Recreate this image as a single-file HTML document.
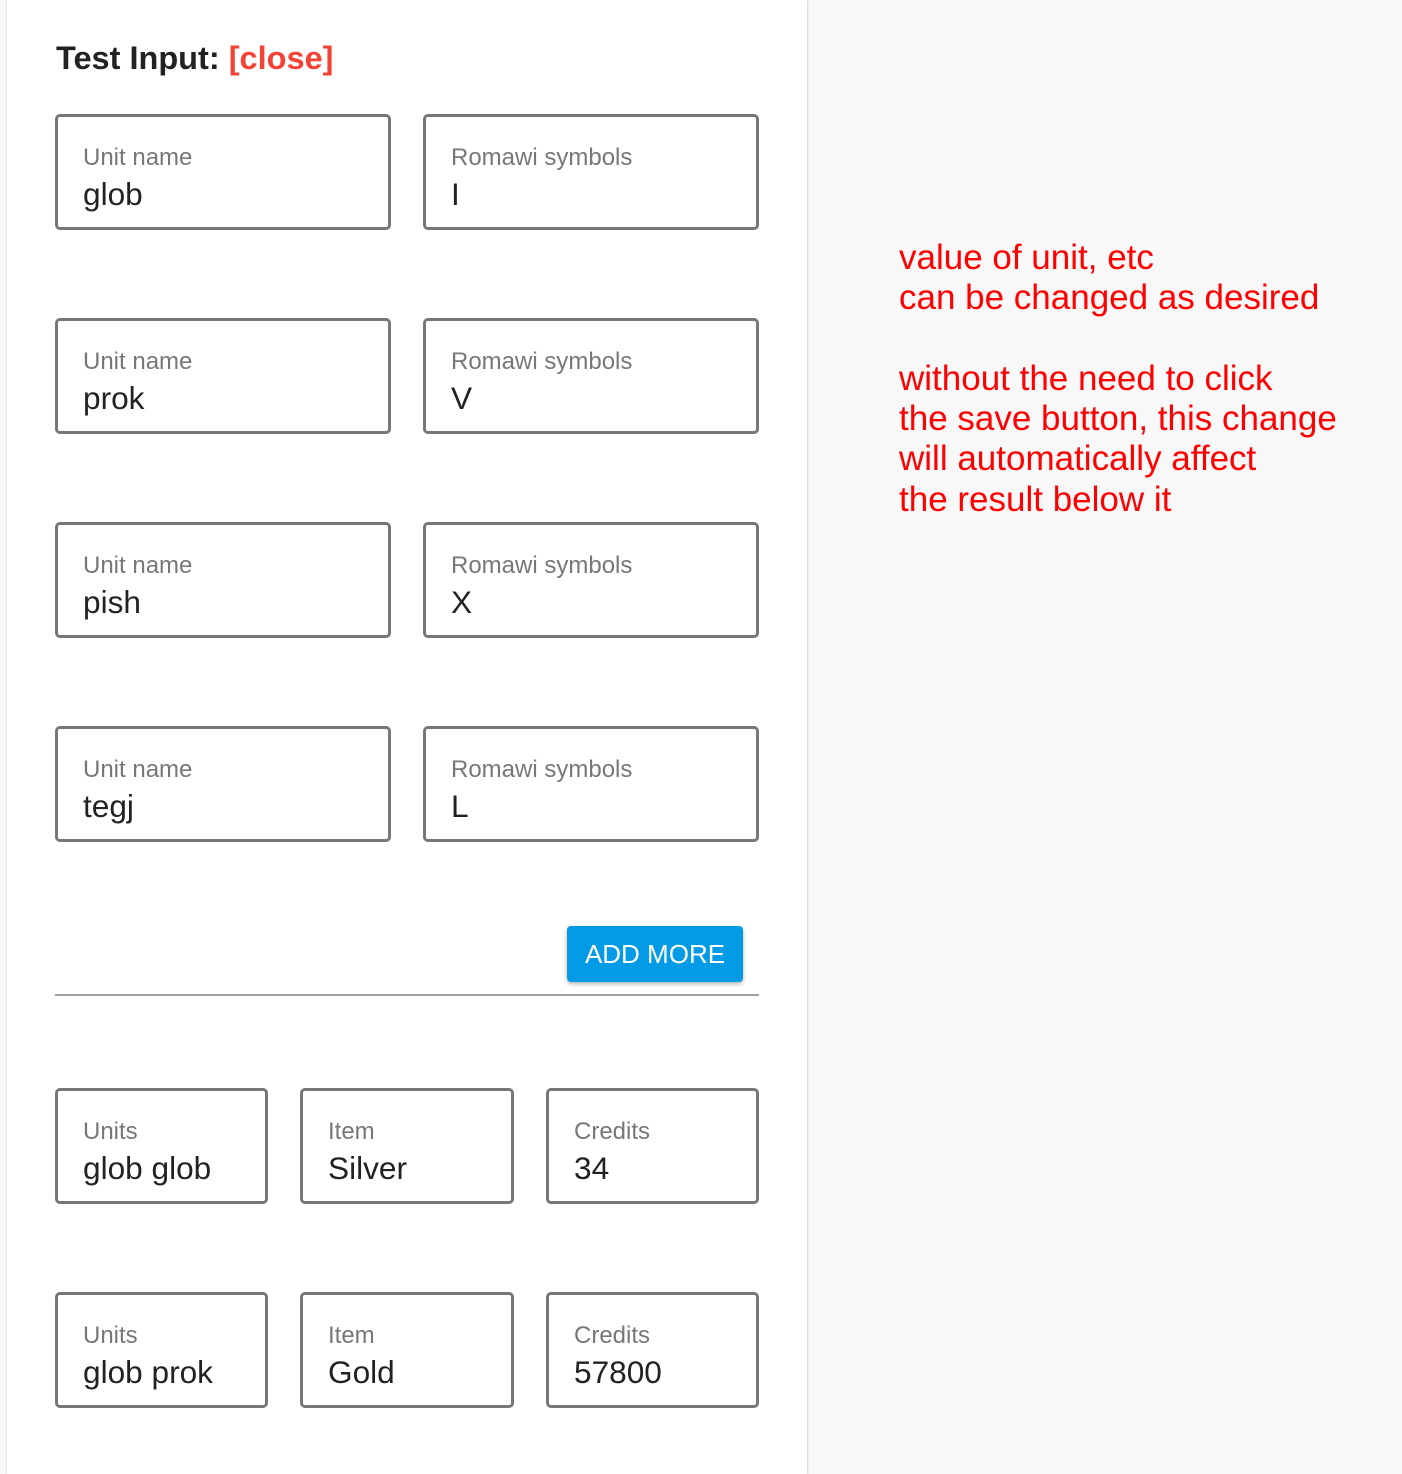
<!DOCTYPE html>
<html><head><meta charset="utf-8"><style>
*{margin:0;padding:0;box-sizing:border-box}
body{width:1402px;height:1474px;background:#f8f8f8;font-family:"Liberation Sans",Arial,sans-serif;position:relative;overflow:hidden}
.panel{position:absolute;left:7px;top:0;width:800px;height:1474px;background:#fff;box-shadow:1px 0 2px rgba(0,0,0,.15),-1px 0 2px rgba(0,0,0,.08)}
.title{position:absolute;left:56px;top:38px;font-size:32.5px;font-weight:bold;color:#222;line-height:40px}
.title span{color:#f44336}
.box{position:absolute;border:3px solid #777;border-radius:5px;height:116px;background:#fff}
.lab{position:absolute;left:25px;top:28px;font-size:24px;line-height:26px;color:#777;white-space:nowrap}
.val{position:absolute;left:25px;top:59px;font-size:31.6px;line-height:36px;color:#222;white-space:nowrap}
.btn{position:absolute;left:567px;top:926px;width:176px;height:56px;background:#039be5;color:#fff;font-size:26px;line-height:56px;text-align:center;border-radius:4px;box-shadow:0 2px 4px rgba(0,0,0,.3)}
.hr{position:absolute;left:55px;top:994px;width:704px;height:2px;background:#a0a0a0}
.note{position:absolute;left:899px;top:238px;color:#f00;font-size:35px;line-height:40.3px;white-space:pre}
</style></head><body>
<div class="panel"></div>
<div class="title">Test Input: <span>[close]</span></div>

<div class="box" style="left:55px;top:114px;width:336px"><div class="lab">Unit name</div><div class="val">glob</div></div>
<div class="box" style="left:423px;top:114px;width:336px"><div class="lab">Romawi symbols</div><div class="val">I</div></div>
<div class="box" style="left:55px;top:318px;width:336px"><div class="lab">Unit name</div><div class="val">prok</div></div>
<div class="box" style="left:423px;top:318px;width:336px"><div class="lab">Romawi symbols</div><div class="val">V</div></div>
<div class="box" style="left:55px;top:522px;width:336px"><div class="lab">Unit name</div><div class="val">pish</div></div>
<div class="box" style="left:423px;top:522px;width:336px"><div class="lab">Romawi symbols</div><div class="val">X</div></div>
<div class="box" style="left:55px;top:726px;width:336px"><div class="lab">Unit name</div><div class="val">tegj</div></div>
<div class="box" style="left:423px;top:726px;width:336px"><div class="lab">Romawi symbols</div><div class="val">L</div></div>

<div class="btn">ADD MORE</div>
<div class="hr"></div>

<div class="box" style="left:55px;top:1088px;width:213px"><div class="lab">Units</div><div class="val">glob glob</div></div>
<div class="box" style="left:300px;top:1088px;width:214px"><div class="lab">Item</div><div class="val">Silver</div></div>
<div class="box" style="left:546px;top:1088px;width:213px"><div class="lab">Credits</div><div class="val">34</div></div>
<div class="box" style="left:55px;top:1292px;width:213px"><div class="lab">Units</div><div class="val">glob prok</div></div>
<div class="box" style="left:300px;top:1292px;width:214px"><div class="lab">Item</div><div class="val">Gold</div></div>
<div class="box" style="left:546px;top:1292px;width:213px"><div class="lab">Credits</div><div class="val">57800</div></div>

<div class="note">value of unit, etc
can be changed as desired

without the need to click
the save button, this change
will automatically affect
the result below it</div>
</body></html>
